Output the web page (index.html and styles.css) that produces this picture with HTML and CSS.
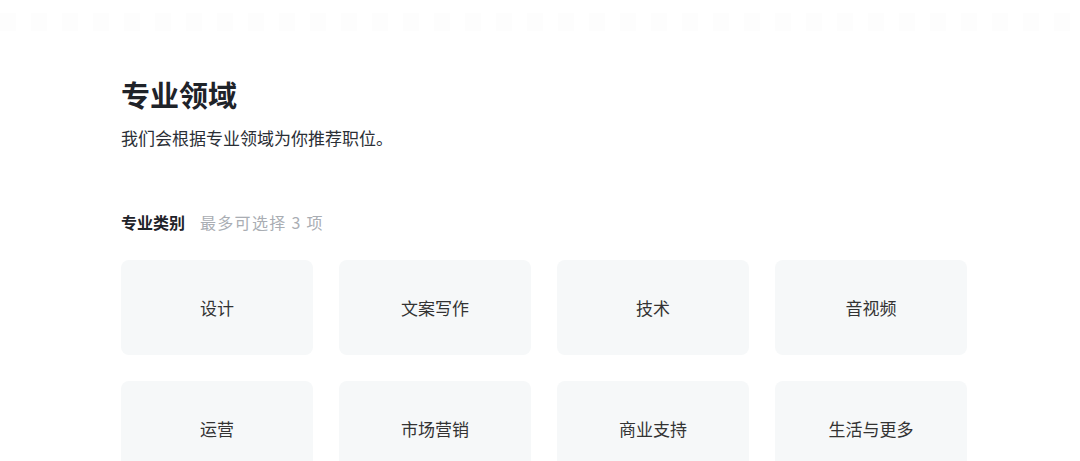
FILE: index.html
```html
<!DOCTYPE html>
<html lang="zh-CN">
<head>
<meta charset="utf-8">
<link rel="stylesheet" href="styles.css">
</head>
<body>
<div class="topline"></div>
<main class="page">
  <h1 class="title">专业领域</h1>
  <p class="subtitle">我们会根据专业领域为你推荐职位。</p>
  <div class="label-row">
    <span class="label">专业类别</span>
    <span class="hint">最多可选择 3 项</span>
  </div>
  <div class="grid">
    <div class="card">设计</div>
    <div class="card">文案写作</div>
    <div class="card">技术</div>
    <div class="card">音视频</div>
    <div class="card">运营</div>
    <div class="card">市场营销</div>
    <div class="card">商业支持</div>
    <div class="card">生活与更多</div>
  </div>
</main>
</body>
</html>
```
FILE: styles.css
```css
html, body {
  margin: 0;
  padding: 0;
  background: #ffffff;
  font-family: "Noto Sans CJK SC", "Noto Sans", sans-serif;
  overflow: hidden;
}
.topline {
  height: 18px;
  margin-top: 13px;
  background: repeating-linear-gradient(90deg, #fdfdfd 0 16px, #ffffff 16px 31px);
}
.page {
  padding-left: 121px;
  width: 846px;
}
.title {
  margin: 43px 0 0;
  font-size: 29px;
  line-height: 40px;
  font-weight: 700;
  color: #1f2329;
}
.subtitle {
  margin: 12px 0 0;
  font-size: 17px;
  line-height: 24px;
  font-weight: 400;
  color: #2b2f36;
}
.label-row {
  margin-top: 61px;
  display: flex;
  align-items: baseline;
  gap: 15px;
  font-size: 16px;
  line-height: 22px;
}
.label {
  font-weight: 700;
  color: #1f2329;
}
.hint {
  color: #a9adb3;
  letter-spacing: 1.3px;
}
.grid {
  margin-top: 27px;
  display: grid;
  grid-template-columns: repeat(4, 192px);
  column-gap: 26px;
  row-gap: 26px;
}
.card {
  height: 95px;
  border-radius: 8px;
  background: #f6f8f9;
  display: flex;
  align-items: center;
  justify-content: center;
  font-size: 17px;
  color: #333333;
}
```
